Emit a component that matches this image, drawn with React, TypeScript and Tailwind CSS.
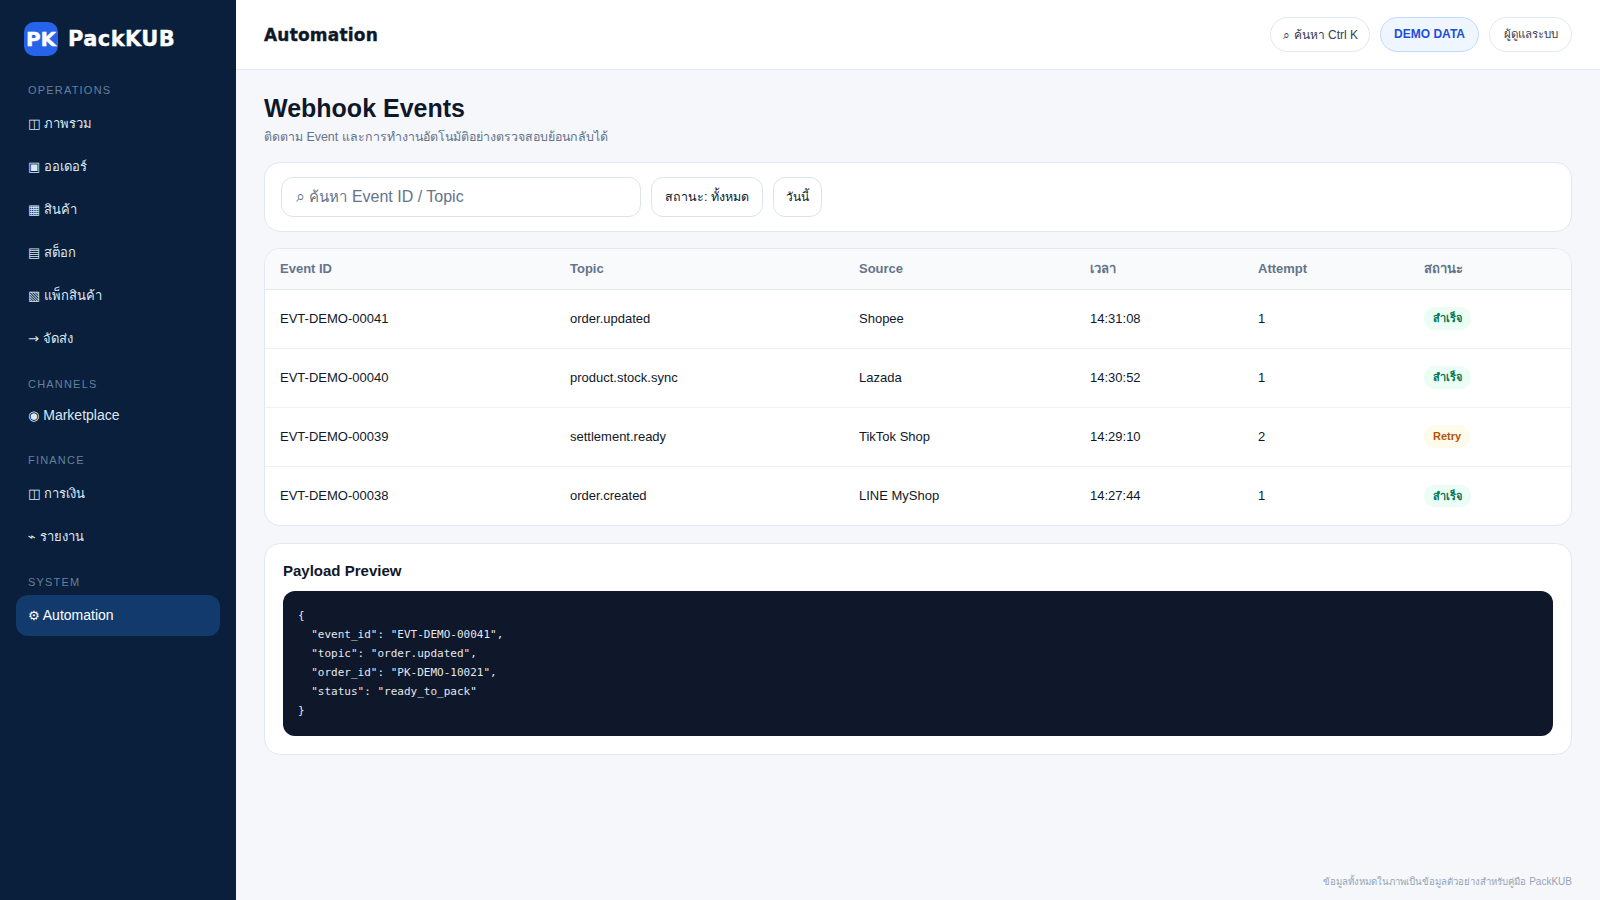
const FONT = "font-['Liberation_Sans',Arial,sans-serif]";
const HEAVY = "font-['DejaVu_Sans',Arial,sans-serif] font-bold [-webkit-text-stroke:0.35px]";
const GLYPH = "font-['DejaVu_Sans',sans-serif]";

const navGroups = [
  {
    label: "OPERATIONS",
    items: [
      ["◫", "ภาพรวม"],
      ["▣", "ออเดอร์"],
      ["▦", "สินค้า"],
      ["▤", "สต็อก"],
      ["▧", "แพ็กสินค้า"],
      ["→", "จัดส่ง"],
    ],
  },
  { label: "CHANNELS", items: [["◉", "Marketplace"]] },
  {
    label: "FINANCE",
    items: [
      ["◫", "การเงิน"],
      ["⌁", "รายงาน"],
    ],
  },
  { label: "SYSTEM", items: [["⚙", "Automation"]] },
];

const events = [
  ["EVT-DEMO-00041", "order.updated", "Shopee", "14:31:08", "1", "ok"],
  ["EVT-DEMO-00040", "product.stock.sync", "Lazada", "14:30:52", "1", "ok"],
  ["EVT-DEMO-00039", "settlement.ready", "TikTok Shop", "14:29:10", "2", "retry"],
  ["EVT-DEMO-00038", "order.created", "LINE MyShop", "14:27:44", "1", "ok"],
];

const payload = `{
  "event_id": "EVT-DEMO-00041",
  "topic": "order.updated",
  "order_id": "PK-DEMO-10021",
  "status": "ready_to_pack"
}`;

function navItemClass(label: string) {
  if (label === "Automation") {
    return "mb-[2px] flex h-[41px] items-center whitespace-pre rounded-xl bg-[#123a6d] px-3 text-sm text-white";
  }
  if (label === "Marketplace") {
    return "mb-[2px] flex h-[37.5px] items-center whitespace-pre rounded-xl px-3 text-sm text-[#dbe7f5]";
  }
  return "mb-[2px] flex h-[41px] items-center whitespace-pre rounded-xl px-3 text-sm text-[#dbe7f5]";
}

function Sidebar() {
  return (
    <aside className="w-[236px] shrink-0 bg-[#0a1f3c] px-4 pt-[22px]">
      <div className="flex items-center gap-[10px] pl-2">
        <div className={`flex h-[34px] w-[34px] items-center justify-center rounded-[10px] bg-[#2563eb] text-[20px] leading-none text-white ${HEAVY}`}>
          PK
        </div>
        <span className={`pt-[2px] text-[21px] tracking-[0.4px] text-white ${HEAVY}`}>PackKUB</span>
      </div>
      <nav className="mt-[27px]">
        {navGroups.map((group) => (
          <div key={group.label} className="mb-[18px]">
            <div className="h-[20px] px-3 text-[11px] leading-[14px] tracking-[1.2px] text-[#64809f]">
              {group.label}
            </div>
            {group.items.map(([icon, label]) => {
              const thai = !/^[A-Za-z]/.test(label);
              return (
                <div key={label} className={navItemClass(label)}>
                  <div>
                    <span className={`text-[13px] ${GLYPH}`}>{icon}</span>{" "}
                    <span className={thai ? "text-[13px]" : "text-sm"}>{label}</span>
                  </div>
                </div>
              );
            })}
          </div>
        ))}
      </nav>
    </aside>
  );
}

function Header() {
  return (
    <header className="flex h-[70px] items-center justify-between border-b border-[#e2e8f0] bg-white px-7">
      <h2 className={`pt-[2px] text-[17px] tracking-[0.2px] text-[#0f172a] ${HEAVY}`}>Automation</h2>
      <div className="flex items-center gap-[10px]">
        <div className="flex h-[35px] items-center rounded-full border border-[#e2e8f0] bg-white pl-[12px] pr-[11px] text-xs text-[#334155]">
          ⌕ ค้นหา Ctrl K
        </div>
        <div className="flex h-[35px] items-center rounded-full border border-[#bfdbfe] bg-[#eff6ff] px-[13px] pb-[2px] text-xs font-semibold text-[#1d4ed8]">
          DEMO DATA
        </div>
        <div className="flex h-[35px] items-center rounded-full border border-[#e2e8f0] bg-white px-[13.5px] text-[11.5px] text-[#334155]">
          ผู้ดูแลระบบ
        </div>
      </div>
    </header>
  );
}

function StatusPill({ status }: { status: string }) {
  if (status === "retry") {
    return (
      <span className="inline-block rounded-full bg-[#fffbeb] px-[9px] py-[3px] text-[11px] font-semibold text-[#b45309]">
        Retry
      </span>
    );
  }
  return (
    <span className="inline-block rounded-full bg-[#ecfdf5] px-[9px] py-[3px] text-[11px] font-semibold text-[#047857]">
      สำเร็จ
    </span>
  );
}

function EventsTable() {
  return (
    <div className="mt-4 overflow-hidden rounded-2xl border border-[#e2e8f0] bg-white">
      <table className="w-full table-fixed border-collapse text-left">
        <colgroup>
          <col className="w-[290px]" />
          <col className="w-[289px]" />
          <col className="w-[231px]" />
          <col className="w-[168px]" />
          <col className="w-[166px]" />
          <col />
        </colgroup>
        <thead>
          <tr className="h-[40px] border-b border-[#e2e8f0] bg-[#f8fafc] text-[13px] font-bold text-[#64748b]">
            <th className="px-[15px]">Event ID</th>
            <th className="px-[15px]">Topic</th>
            <th className="px-[15px]">Source</th>
            <th className="px-[15px]">เวลา</th>
            <th className="px-[15px]">Attempt</th>
            <th className="px-[15px]">สถานะ</th>
          </tr>
        </thead>
        <tbody>
          {events.map((row, i) => (
            <tr
              key={row[0]}
              className={
                i < events.length - 1
                  ? "h-[59px] border-b border-[#eef2f7] text-[13px] text-[#0f172a]"
                  : "h-[59px] text-[13px] text-[#0f172a]"
              }
            >
              <td className="px-[15px]">{row[0]}</td>
              <td className="px-[15px]">{row[1]}</td>
              <td className="px-[15px]">{row[2]}</td>
              <td className="px-[15px]">{row[3]}</td>
              <td className="px-[15px]">{row[4]}</td>
              <td className="px-[15px]">
                <StatusPill status={row[5]} />
              </td>
            </tr>
          ))}
        </tbody>
      </table>
    </div>
  );
}

export default function App() {
  return (
    <div className={`flex min-h-[900px] bg-[#f5f7fb] ${FONT}`}>
      <Sidebar />
      <div className="flex min-w-0 flex-1 flex-col">
        <Header />
        <main className="flex flex-1 flex-col px-7 pt-[23px]">
          <h1 className="text-[25px] font-bold leading-[30px] text-[#0f172a]">Webhook Events</h1>
          <p className="mt-[5px] text-[12.4px] leading-[18px] text-[#64748b]">
            ติดตาม Event และการทำงานอัตโนมัติอย่างตรวจสอบย้อนกลับได้
          </p>

          <div className="mt-4 flex items-center gap-[10px] rounded-2xl border border-[#e2e8f0] bg-white px-4 py-[14px]">
            <div className="flex h-[40px] w-[360px] items-center whitespace-pre rounded-xl border border-[#dbe3ef] px-[14px] text-base text-[#64748b]">
              <div>
                ⌕ <span className="text-[15px]">ค้นหา</span> Event ID / Topic
              </div>
            </div>
            <div className="flex h-[40px] items-center rounded-xl border border-[#dbe3ef] px-[13px] text-[12.5px] text-[#0f172a]">
              สถานะ: ทั้งหมด
            </div>
            <div className="flex h-[40px] items-center rounded-xl border border-[#dbe3ef] px-[12px] text-xs text-[#0f172a]">
              วันนี้
            </div>
          </div>

          <EventsTable />

          <section className="mt-[17px] rounded-2xl border border-[#e2e8f0] bg-white px-[18px] pb-[18px] pt-[17px]">
            <h3 className="text-[15px] font-bold leading-[20px] text-[#0f172a]">Payload Preview</h3>
            <pre className="mt-[10px] rounded-xl bg-[#0f172a] pb-4 pl-[15px] pr-4 pt-[15px] font-['DejaVu_Sans_Mono',monospace] text-[11px] leading-[19px] text-[#e2e8f0]">
              {payload}
            </pre>
          </section>

          <div className="mt-auto pb-[11px] text-right text-[10px] text-[#94a3b8]">
            <span className="text-[9.6px]">ข้อมูลทั้งหมดในภาพเป็นข้อมูลตัวอย่างสำหรับคู่มือ</span> PackKUB
          </div>
        </main>
      </div>
    </div>
  );
}
